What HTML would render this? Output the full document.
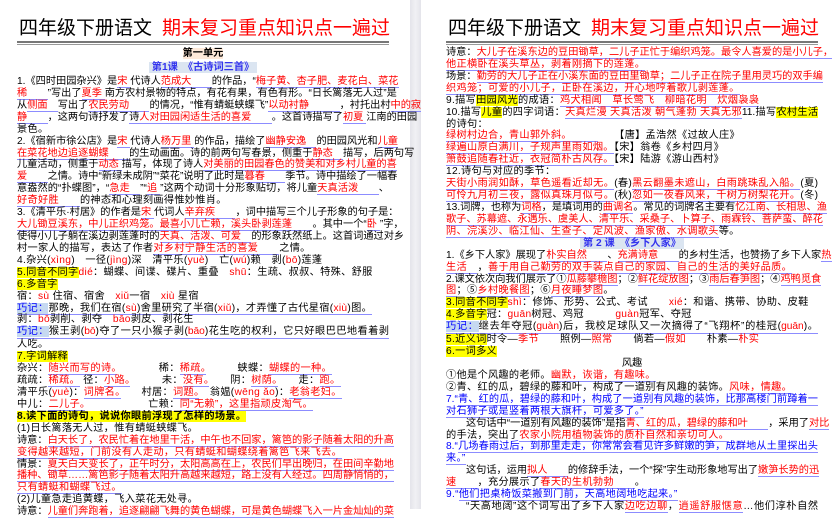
<!DOCTYPE html>
<html><head><meta charset="utf-8"><style>
*{margin:0;padding:0}
body{width:832px;height:509px;overflow:hidden;background:#fff;position:relative;font-family:"Liberation Sans","Noto Sans CJK SC",sans-serif;font-size:10.2px;color:#000}
.gut{position:absolute;left:410px;top:0;width:11px;height:509px;background:linear-gradient(90deg,#e4e4ea,#f0f0f4,#e4e4ea)}
.tb,.tr{position:absolute;top:16px;font-size:19px;white-space:nowrap;line-height:25px;text-align:justify;text-align-last:justify}
.tb{width:133px}
.tr{width:227px;color:#f00}
.dbl{position:absolute;top:41px;border-top:2px solid #777;border-bottom:1px solid #999;height:1px}
.pg{position:absolute;line-height:11.93px;white-space:nowrap}
.pg div{height:11.93px;width:372px;text-align:justify;text-align-last:justify}
.pg div.s{text-align-last:left;letter-spacing:0.3px}
.pg div.c{text-align:center;text-align-last:center}
.r{color:#f00}
.b{color:#00f}
.u{border-bottom:1px solid #8c8cff}
.y{background:#ff0}
.q{background:#c6d9f1;color:#00f}
.h{font-weight:bold;color:#3333ee;background:#dbe5f1;padding:0 3px}
.ind{padding-left:20px;box-sizing:border-box}
</style></head><body>
<div class="gut"></div>

<div class="tb" style="left:19px">四年级下册语文</div>
<div class="tr" style="left:162px">期末复习重点知识点一遍过</div>
<div class="dbl" style="left:17px;width:372px"></div>
<div class="tb" style="left:448px">四年级下册语文</div>
<div class="tr" style="left:591px">期末复习重点知识点一遍过</div>
<div class="dbl" style="left:446px;width:372px"></div>

<div style="position:absolute;left:17px;width:372px;top:48px;text-align:center;font-weight:bold;line-height:12px"><span style="background:#fde9d9">第一单元</span></div>
<div style="position:absolute;left:17px;width:372px;top:62px;text-align:center;line-height:12px"><span class="h">第1课　《古诗词三首》</span></div>

<div class="pg" style="left:17px;top:76px">
<div>1.《四时田园杂兴》是<span class="r u">宋 </span>代诗人<span class="r u">范成大　　</span>的作品，“<span class="r u">梅子黄、杏子肥、麦花白、菜花</span></div>
<div><span class="r u">稀　　</span>”写出了<span class="r u">夏季 </span>南方农村景物的特点，有花有果，有色有形。“日长篱落无人过”是</div>
<div>从<span class="r u">侧面　</span>写出了<span class="r u">农民劳动　　</span>的情况，“惟有蜻蜓蛱蝶飞”<span class="r u">以动衬静　　　</span>，衬托出村<span class="r u">中的寂</span></div>
<div><span class="r u">静　　</span>，这两句诗抒发了<span class="u">诗<span class="r">人对田园闲适生活的喜爱　　</span></span>。这首诗描写了<span class="r u">初夏 </span>江南的田园</div>
<div class="s">景色。</div>
<div>2.《宿新市徐公店》是<span class="r u">宋 </span>代诗人<span class="r u">杨万里 </span>的作品，描绘了<span class="r u">幽静安逸　</span>的田园风光和<span class="r u">儿童</span></div>
<div><span class="r u">在菜花地边追逐蝴蝶　　</span>的生动画面。诗的前两句写春景，侧重于<span class="r u">静态　</span>描写，后两句写</div>
<div>儿童活动，侧重于<span class="r u">动态 </span>描写，体现了诗人<span class="r u">对美丽的田园春色的赞美和对乡村儿童的喜</span></div>
<div><span class="r u">爱　　</span>之情。诗中“新绿未成阴”“菜花”说明了此时是<span class="r u">暮春　　</span>季节。诗中描绘了一幅春</div>
<div>意盎然的“扑蝶图”，“<span class="r u">急走　</span>”“<span class="r u">追 </span>”这两个动词十分形象贴切，将儿童<span class="r u">天真活泼　　</span>、</div>
<div class="s"><span class="r u">好奇好胜　　</span>的神态和心理刻画得惟妙惟肖。</div>
<div>3.《清平乐·村居》的作者是<span class="r u">宋 </span>代词人<span class="r u">辛弃疾　　</span>，词中描写三个儿子形象的句子是：</div>
<div><span class="r u">大儿锄豆溪东，中儿正织鸡笼。最喜小儿亡赖，溪头卧剥莲蓬　　</span>。其中一个“<span class="r u">卧 </span>”字，</div>
<div>使得小儿子躺在溪边剥莲蓬时的<span class="r u">天真、活泼、可爱　</span>的形象跃然纸上。这首词通过对乡</div>
<div class="s">村一家人的描写，表达了作者<span class="r u">对乡村宁静生活的喜爱　　</span>之情。</div>
<div class="s">4.杂兴(<span class="r">xìng</span>)　一径(<span class="r">jìng</span>)深　清平乐(<span class="r">yuè</span>)　亡(<span class="r">wú</span>)赖　剥(<span class="r">bō</span>)莲蓬</div>
<div class="s"><span class="y">5.同音不同字</span><span class="r">dié</span>：蝴蝶、间谍、碟片、重叠　<span class="r">shū</span>：生疏、叔叔、特殊、舒服</div>
<div class="s"><span class="y">6.多音字</span></div>
<div class="s">宿：<span class="r">sù</span> 住宿、宿舍　<span class="r">xiǔ</span>一宿　<span class="r">xiù</span> 星宿</div>
<div class="s"><span class="u"><span class="q">巧记：</span>那晚，我们在宿(<span class="r">sù</span>)舍里研究了半宿(<span class="r">xiǔ</span>)，才弄懂了古代星宿(<span class="r">xiù</span>)图。</span></div>
<div class="s">剥：<span class="r">bō</span>剥削、剥夺　<span class="r">bāo</span>剥皮、剥花生</div>
<div class="u"><span class="q">巧记：</span>猴王剥(<span class="r">bō</span>)夺了一只小猴子剥(<span class="r">bāo</span>)花生吃的权利，它只好眼巴巴地看着剥</div>
<div class="s">人吃。</div>
<div class="s"><span class="y">7.字词解释</span></div>
<div class="s">杂兴：<span class="r u">随兴而写的诗。</span>　　　　稀：<span class="r u">稀疏。</span>　　　蛱蝶：<span class="r u">蝴蝶的一种。</span></div>
<div class="s">疏疏：<span class="r u">稀疏。</span> 径：<span class="r u">小路。</span>　　　未：<span class="r u">没有。</span>　　阴：<span class="r u">树荫。</span>　　走：<span class="r u">跑。</span></div>
<div class="s">清平乐(<span class="r">yuè</span>)：<span class="r u">词牌名。</span>　　村居：<span class="r u">词题。</span>　翁媪(<span class="r">wēng ǎo</span>)：<span class="r u">老翁老妇。</span></div>
<div class="s">中儿：<span class="r u">二儿子。</span>　　　　　　亡赖：<span class="r u">同“无赖”，这里指顽皮淘气。</span></div>
<div class="s"><span class="y" style="font-weight:bold">8.读下面的诗句，说说你眼前浮现了怎样的场景。</span></div>
<div class="s">(1)日长篱落无人过，惟有蜻蜓蛱蝶飞。</div>
<div>诗意：<span class="r u">白天长了，农民忙着在地里干活，中午也不回家，篱笆的影子随着太阳的升高</span></div>
<div class="s"><span class="r u">变得越来越短，门前没有人走动，只有蜻蜓和蝴蝶绕着篱笆飞来飞去。</span></div>
<div>情景：<span class="r u">夏天白天变长了，正午时分，太阳高高在上，农民们早出晚归，在田间辛勤地</span></div>
<div><span class="r u">播种、锄草……篱笆影子随着太阳升高越来越短，路上没有人经过。四周静悄悄的，</span></div>
<div class="s"><span class="r u">只有蜻蜓和蝴蝶飞过。</span></div>
<div class="s">(2)儿童急走追黄蝶，飞入菜花无处寻。</div>
<div>诗意：<span class="r u">儿童们奔跑着，追逐翩翩飞舞的黄色蝴蝶，可是黄色蝴蝶飞入一片金灿灿的菜</span></div>
</div>

<div class="pg" style="left:446px;top:47px">
<div>诗意：<span class="r u">大儿子在溪东边的豆田锄草，二儿子正忙于编织鸡笼。最令人喜爱的是小儿子，</span></div>
<div class="s"><span class="r u">他正横卧在溪头草丛，剥着刚摘下的莲蓬。</span></div>
<div>场景：<span class="r u">勤劳的大儿子正在小溪东面的豆田里锄草；二儿子正在院子里用灵巧的双手编</span></div>
<div class="s"><span class="r u">织鸡笼；可爱的小儿子，正卧在溪边，开心地哼着歌儿剥莲蓬。</span></div>
<div class="s">9.描写<span class="y">田园风光</span>的成语：<span class="r u">鸡犬相闻　草长莺飞　柳暗花明　炊烟袅袅</span></div>
<div>10.描写<span class="y">儿童</span>的四字词语：<span class="r u">天真烂漫 天真活泼 朝气蓬勃 天真无邪</span>11.描写<span class="y">农村生活</span></div>
<div class="s">的诗句：</div>
<div class="s"><span class="r u">绿树村边合，青山郭外斜。　　　</span>　　【唐】孟浩然《过故人庄》</div>
<div class="s"><span class="r u">绿遍山原白满川，子规声里雨如烟。</span>【宋】翁卷《乡村四月》</div>
<div class="s"><span class="r u">箫鼓追随春社近，衣冠简朴古风存。</span>【宋】陆游《游山西村》</div>
<div class="s">12.诗句与对应的季节：</div>
<div><span class="r u">天街小雨润如酥，草色遥看近却无。</span>(春)<span class="r u">黑云翻墨未遮山，白雨跳珠乱入船。</span>(夏)</div>
<div><span class="r u">可怜九月初三夜，露似真珠月似弓。</span>(秋)<span class="r u">忽如一夜春风来，千树万树梨花开。</span>(冬)</div>
<div>13.词牌，也称为<span class="r u">词格</span>，是填词用的<span class="r u">曲调名</span>。常见的词牌名主要有<span class="r u">忆江南、长相思、渔</span></div>
<div><span class="r u">歌子、苏幕遮、永遇乐、虞美人、清平乐、采桑子、卜算子、雨霖铃、菩萨蛮、醉花</span></div>
<div class="s"><span class="r u">阴、浣溪沙、临江仙、生查子、定风波、渔家傲、水调歌头</span>等。</div>
<div class="c"><span class="h">第 2 课　《乡下人家》</span></div>
<div>1.《乡下人家》展现了<span class="r u">朴实自然　　</span>、<span class="r u">充满诗意　　</span>的乡村生活，也赞扬了乡下人家<span class="r u">热爱</span></div>
<div class="s"><span class="r u">生活　</span>，<span class="r u">善于用自己勤劳的双手装点自己的家园、自己的生活的美好品质。</span></div>
<div>2.课文依次向我们展示了①<span class="r u">瓜藤攀檐图</span>；②<span class="r u">鲜花绽放图</span>；③<span class="r u">雨后春笋图</span>；④<span class="r u">鸡鸭觅食</span></div>
<div class="s"><span class="r u">图</span>；⑤<span class="r u">乡村晚餐图</span>；⑥<span class="r u">月夜睡梦图</span>。</div>
<div class="s"><span class="y">3.同音不同字</span><span class="r">shì</span>：修饰、形势、公式、考试　　<span class="r">xié</span>：和谐、携带、协助、皮鞋</div>
<div class="s"><span class="y">4.多音字</span>冠：<span class="r">guān</span>树冠、鸡冠　　　<span class="r">guàn</span>冠军、夺冠</div>
<div class="u"><span class="q">巧记：</span>继去年夺冠(<span class="r">guàn</span>)后，我校足球队又一次摘得了“飞翔杯”的桂冠(<span class="r">guān</span>)。</div>
<div class="s"><span class="y">5.近义词</span>时令—<span class="r">季节</span>　　照例—<span class="r">照常</span>　　倘若—<span class="r">假如</span>　　朴素—<span class="r">朴实</span></div>
<div class="s"><span class="y">6.一词多义</span></div>
<div class="c">风趣</div>
<div class="s">①他是个风趣的老师。<span class="r u">幽默，诙谐，有趣味。</span></div>
<div class="s">②青、红的瓜，碧绿的藤和叶，构成了一道别有风趣的装饰。<span class="r u">风味，情趣。</span></div>
<div class="b">7.“<span class="u">青、红的瓜，碧绿的藤和叶，构成了一道别有风趣的装饰，比那高楼门前蹲着一</span></div>
<div class="b s"><span class="u">对石狮子或是竖着两根大旗杆，可爱多了。”</span></div>
<div class="ind">这句话中“一道别有风趣的装饰”是指<span class="r u">青、红的瓜，碧绿的藤和叶　　</span>，采用了<span class="r u">对比</span></div>
<div class="s">的手法，突出了<span class="r u">农家小院用植物装饰的质朴自然和亲切可人。</span></div>
<div class="b">8.“<span class="u">几场春雨过后，到那里走走，你常常会看见许多鲜嫩的笋，成群地从土里探出头</span></div>
<div class="b s"><span class="u">来。”</span></div>
<div class="ind">这句话，运用<span class="r u">拟人　　</span>的修辞手法，一个“探”字生动形象地写出了<span class="r u">嫩笋长势的迅</span></div>
<div class="s"><span class="r u">速　　</span>，充分展示了<span class="r u">春天的生机勃勃　　</span>。</div>
<div class="b s">9.“<span class="u">他们把桌椅饭菜搬到门前，天高地阔地吃起来。”</span></div>
<div class="ind">“天高地阔”这个词写出了乡下人家<span class="r u">边吃边聊</span>，<span class="r u">逍遥舒服惬意</span>…他们淳朴自然</div>
</div>
</body></html>
